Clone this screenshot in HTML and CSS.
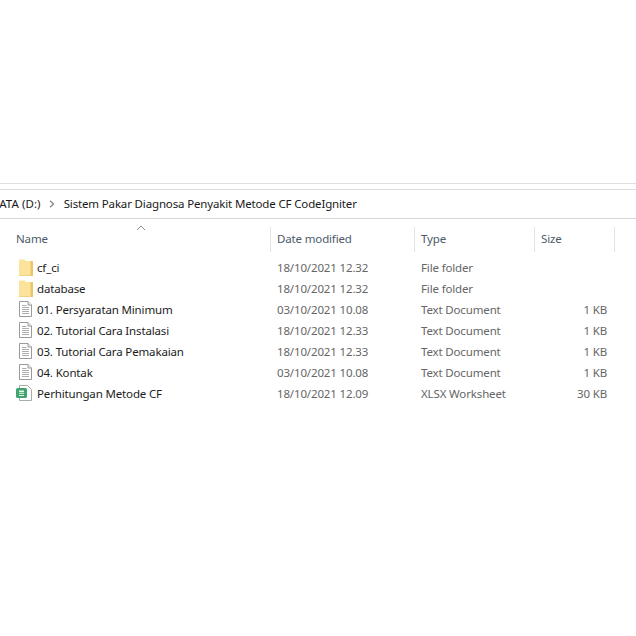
FILE: index.html
```html
<!DOCTYPE html>
<html lang="en">
<head>
<meta charset="utf-8">
<title>Explorer</title>
<link rel="stylesheet" href="styles.css">
</head>
<body>
<svg class="defs" width="0" height="0" aria-hidden="true">
  <symbol id="folder" viewBox="0 0 14 17">
    <path d="M0 1.500a1 1 0 0 1 1-1h4.500l1.500 1.500h6a1 1 0 0 1 1 1v14h-14z" fill="#fbe39b"/>
    <path d="M11.500 2h1.500a1 1 0 0 1 1 1v14h-2.500z" fill="#ecc566"/>
    <path d="M0 16.500h11.500" stroke="#f0d184"/>
  </symbol>
  <symbol id="doc" viewBox="0 0 13 16">
    <path d="M.5.500h8.500l3.500 3.500v11.500h-12z" fill="#fff" stroke="#9a9a9a"/>
    <path d="M9 .500v3.500h3.500" fill="#eee" stroke="#9a9a9a"/>
    <path d="M3 4.500h4.500M3 6.500h7M3 8.500h7M3 10.500h7M3 12.500h7" stroke="#adadad"/>
  </symbol>
  <symbol id="xlsx" viewBox="0 0 16 16">
    <path d="M3.500.500h8l4 4v11h-12z" fill="#fff" stroke="#a5aea7"/>
    <rect x="0" y="3" width="11" height="10" rx="1.500" fill="#3fa56d"/>
    <path d="M3 5.500h5v1.500h-5zM3 7.800h5v1h-5zM3 10h5v1h-5z" fill="#e8f7ee"/>
  </symbol>
</svg>
<main class="window">
  <div class="rule-top"></div>
  <nav class="address">
    <span class="crumb-clip">DATA (D:)</span>
    <svg class="chevron" width="6" height="8" viewBox="0 0 6 8"><path d="M1 .8 4.500 4 1 7.200" fill="none" stroke="#8a8a8a" stroke-width="1.400"/></svg>
    <span>Sistem Pakar Diagnosa Penyakit Metode CF CodeIgniter</span>
  </nav>
  <div class="list">
    <div class="head">
      <div class="head-cell name-head">Name
        <svg class="sort" width="10" height="6" viewBox="0 0 10 6"><path d="M1 5 5 1l4 4" fill="none" stroke="#8a8a8a"/></svg>
      </div>
      <div class="head-cell">Date modified</div>
      <div class="head-cell">Type</div>
      <div class="head-cell">Size</div>
    </div>
    <div class="rows">
      <div class="row"><div class="name"><svg class="icon folder"><use href="#folder"/></svg>cf_ci</div><div>18/10/2021 12.32</div><div>File folder</div><div class="size"></div></div>
      <div class="row"><div class="name"><svg class="icon folder"><use href="#folder"/></svg>database</div><div>18/10/2021 12.32</div><div>File folder</div><div class="size"></div></div>
      <div class="row"><div class="name"><svg class="icon doc"><use href="#doc"/></svg>01. Persyaratan Minimum</div><div>03/10/2021 10.08</div><div>Text Document</div><div class="size">1 KB</div></div>
      <div class="row"><div class="name"><svg class="icon doc"><use href="#doc"/></svg>02. Tutorial Cara Instalasi</div><div>18/10/2021 12.33</div><div>Text Document</div><div class="size">1 KB</div></div>
      <div class="row"><div class="name"><svg class="icon doc"><use href="#doc"/></svg>03. Tutorial Cara Pemakaian</div><div>18/10/2021 12.33</div><div>Text Document</div><div class="size">1 KB</div></div>
      <div class="row"><div class="name"><svg class="icon doc"><use href="#doc"/></svg>04. Kontak</div><div>03/10/2021 10.08</div><div>Text Document</div><div class="size">1 KB</div></div>
      <div class="row"><div class="name"><svg class="icon xlsx"><use href="#xlsx"/></svg>Perhitungan Metode CF</div><div>18/10/2021 12.09</div><div>XLSX Worksheet</div><div class="size">30 KB</div></div>
    </div>
  </div>
</main>
</body>
</html>
```
FILE: styles.css
```css
* { box-sizing: border-box; }
html, body { margin: 0; padding: 0; background: #fff; }
body {
  width: 636px;
  height: 636px;
  overflow: hidden;
  font-family: "Noto Sans", "Open Sans", sans-serif;
  font-size: 11.5px;
  letter-spacing: -0.15px;
  color: #1c1c1c;
}
.defs { display: block; height: 0; }
.window { padding-top: 183px; }
.rule-top { height: 6px; border-top: 1px solid #dfdfdf; }
.address {
  height: 30px;
  padding-bottom: 1px;
  border-top: 1px solid #dcdcdc;
  border-bottom: 1px solid #d6d6d6;
  display: flex;
  align-items: center;
  overflow: hidden;
  white-space: nowrap;
  color: #1a1a1a;
}
.crumb-clip { margin-left: -9px; letter-spacing: 0.07px; }
.chevron { margin: 0 9px 0 8px; }
.head {
  display: grid;
  grid-template-columns: 271px 144px 120px 80px;
  height: 38px;
  padding-top: 8px;
  color: #4d5a68;
}
.head-cell {
  position: relative;
  height: 25px;
  padding: 4px 0 0 6px;
  border-right: 1px solid #e3e3e3;
}
.name-head { padding-left: 16px; }
.sort { position: absolute; left: 136px; top: -2px; }
.rows { display: flex; flex-direction: column; }
.row {
  display: grid;
  grid-template-columns: 271px 144px 120px 72px;
  height: 21px;
  padding-bottom: 1px;
  align-items: center;
  color: #666;
}
.row > div:not(.name):not(.size) { padding-left: 6px; }
.name {
  display: flex;
  align-items: center;
  padding-left: 16px;
  color: #1c1c1c;
  white-space: nowrap;
}
.size { text-align: right; }
.icon { flex: none; }
.folder { width: 14px; height: 17px; margin: 0 4px 0 3px; }
.doc { width: 13px; height: 16px; margin: 0 5px 0 3px; }
.xlsx { width: 16px; height: 16px; margin: 0 5px 0 0; }
```
